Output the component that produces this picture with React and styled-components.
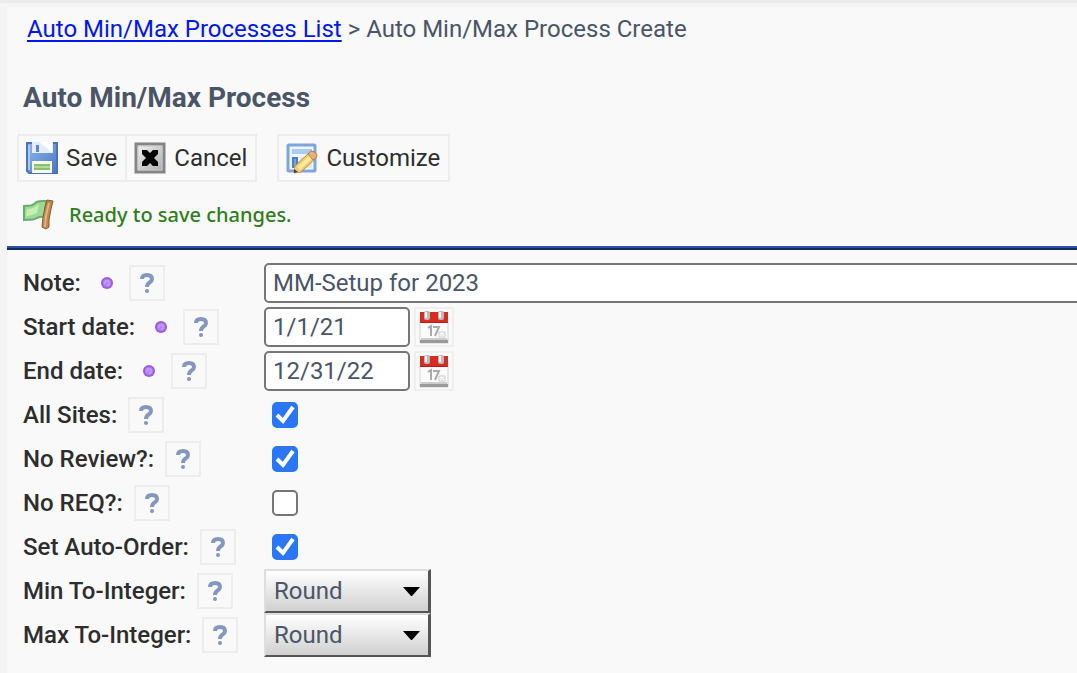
import React from 'react';
import styled, { createGlobalStyle } from 'styled-components';

const GlobalStyle = createGlobalStyle`
  * {
    box-sizing: border-box;
  }
  body {
    margin: 0;
    background: #f4f4f4;
    color: #4a5568;
    font-family: Roboto, 'Liberation Sans', sans-serif;
    font-size: 24px;
    line-height: 28px;
  }
  button,
  input,
  select {
    font: inherit;
    color: inherit;
    margin: 0;
  }
`;

const Frame = styled.div`
  min-height: 100vh;
  padding: 4px 0 0 7px;
  border-top: 3px solid #ebebeb;
  overflow: hidden;
`;

const Page = styled.main`
  min-height: calc(100vh - 7px);
  background: #f9f9f9;
`;

const Breadcrumb = styled.nav`
  padding: 8px 20px 0;

  a {
    color: #0018ee;
    text-decoration-thickness: 2px;
    text-underline-offset: 3px;
  }
`;

const Title = styled.h1`
  margin: 0;
  padding: 39px 16px 20px;
  font-size: 28px;
  line-height: 32px;
  font-weight: 700;
`;

const Toolbar = styled.div`
  display: flex;
  padding-left: 10px;
`;

const ToolButton = styled.button`
  display: flex;
  align-items: center;
  gap: 8px;
  height: 48px;
  padding: 0 8px 0 7px;
  margin-left: ${p => (p.$apart ? '20px' : '0')};
  border: 2px solid #ededed;
  border-left-width: ${p => (p.$joined ? '0' : '2px')};
  background: none;
  color: #2d2d2d;
`;

const Status = styled.p`
  display: flex;
  align-items: center;
  gap: 14px;
  margin: 0;
  padding: 16px 16px 14px;
  color: #2f7d1b;
  font-family: 'Noto Sans', 'Open Sans', sans-serif;
  font-size: 20px;
  font-weight: 500;
  line-height: 34px;
`;

const Rule = styled.hr`
  margin: 0;
  height: 4px;
  border: 0;
  border-top: 2px solid #2d54a4;
  background: #14295c;
`;

const Form = styled.form`
  padding: 11px 0 12px 16px;
`;

const Row = styled.div`
  display: grid;
  grid-template-columns: 241px 1fr;
  align-items: center;
  height: 44px;
`;

const LabelCell = styled.div`
  display: flex;
  align-items: center;
  gap: 11px;

  label {
    color: #2d2d2d;
    font-weight: 500;
    white-space: nowrap;
  }
`;

const Required = styled.svg`
  margin: 0 4px 0 8px;
`;

const HelpButton = styled.button`
  display: grid;
  place-items: center;
  width: 36px;
  height: 36px;
  padding: 0;
  border: 2px solid #ededed;
  background: none;
`;

const Field = styled.div`
  display: flex;
  align-items: center;
  gap: 4px;
`;

const TextInput = styled.input`
  width: ${p => (p.$wide ? 'calc(100% + 12px)' : '146px')};
  flex: none;
  height: 40px;
  padding: 0 7px;
  border: 2px solid #767676;
  border-radius: 5px;
  background: #fff;
`;

const DateButton = styled.button`
  display: grid;
  place-items: center;
  width: 40px;
  height: 40px;
  padding: 0;
  border: 2px solid #efefef;
  background: none;
`;

const Tick = styled.span`
  display: grid;
  margin-left: 8px;

  > * {
    grid-area: 1 / 1;
  }
  svg {
    pointer-events: none;
  }
`;

const CheckBox = styled.input`
  appearance: none;
  width: 26px;
  height: 26px;
  border: 2px solid #767676;
  border-radius: 5px;
  background: #fff;

  &:checked {
    border-color: #2b76f5;
    background: #2b76f5;
  }
  & + svg {
    visibility: hidden;
  }
  &:checked + svg {
    visibility: visible;
  }
`;

const SelectBox = styled.span`
  display: grid;
  align-items: center;
  width: 167px;

  > * {
    grid-area: 1 / 1;
  }
  svg {
    justify-self: end;
    margin-right: 11px;
    pointer-events: none;
  }
`;

const Select = styled.select`
  appearance: none;
  width: 100%;
  height: 44px;
  padding: 0 8px;
  border: 2px solid #dedede;
  border-right: 3px solid #555;
  border-bottom-color: #555;
  border-radius: 0;
  background: linear-gradient(#fff, #d0d0d0);
`;

const SaveIcon = () => (
  <svg width="32" height="32" viewBox="0 0 32 32" aria-hidden="true">
    <defs>
      <linearGradient id="disk" x1="0" y1="0" x2="1" y2="1">
        <stop offset="0" stopColor="#8fb6ea" />
        <stop offset="1" stopColor="#4d77c2" />
      </linearGradient>
    </defs>
    <path d="M1 1h30v30H3l-2-2z" fill="url(#disk)" stroke="#4874bd" strokeWidth="2" />
    <path d="M3 3v25" stroke="#a8c9f0" strokeWidth="2" />
    <path d="M6 0h21v11H6z" fill="#e4ecf6" />
    <path d="M13 0h13v10z" fill="#fff" />
    <path d="M10 3h3v7h-3z" fill="#5788d0" />
    <path d="M6 19h20v12H6z" fill="#f4faed" />
    <path d="M8 22h16v2H8zM8 26h16v2H8z" fill="#8cc06c" />
    <path d="M8 24h16v2H8z" fill="#b4d99c" />
  </svg>
);

const CancelIcon = () => (
  <svg width="32" height="32" viewBox="0 0 32 32" aria-hidden="true">
    <defs>
      <linearGradient id="plate" x1="0" y1="0" x2="1" y2="1">
        <stop offset="0" stopColor="#f4f4f4" />
        <stop offset="1" stopColor="#aaa" />
      </linearGradient>
    </defs>
    <path d="M2 2h28v28H2z" fill="url(#plate)" stroke="#858585" strokeWidth="3" />
    <path d="M4 4h24v24H4z" fill="none" stroke="#c9c9c9" />
    <path
      d="M8 8h5l3 3 3-3h5v4l-4 4 4 4v4h-5l-3-3-3 3H8v-4l4-4-4-4z"
      fill="#050505"
    />
  </svg>
);

const CustomizeIcon = () => (
  <svg width="32" height="32" viewBox="0 0 32 32" aria-hidden="true">
    <rect x="2" y="3" width="27" height="26" rx="1" fill="#eff6fd" stroke="#7fa5dc" strokeWidth="3" />
    <path d="M6 7h20v5H6z" fill="#a9cdf3" />
    <path d="M6 15h6v11H6z" fill="#4f7dc5" />
    <path d="M8 17h2v7H8z" fill="#7fa7df" />
    <path d="M14 15h12v11H14z" fill="#d9e8f8" />
    <path d="M8 31l1-7L24 10l6 6-15 14z" fill="#f1ce62" stroke="#c48a3b" />
    <path d="M11 25L25 12l3 3-14 13z" fill="#fbe99b" />
    <path d="M22 12l3-3 4 1 2 3-1 3-3 2z" fill="#e6b17e" stroke="#b97b45" />
    <path d="M8 31l1-7 6 6z" fill="#ebc698" />
    <path d="M8 31v-4l4 3z" fill="#543821" />
  </svg>
);

const FlagIcon = () => (
  <svg width="32" height="32" viewBox="0 0 32 32" aria-hidden="true">
    <path
      d="M1 7c4-1 6 1 10-2 3-4 8-3 12-3l-1 16c-4-1-6 0-8 1-4 3-8 1-13 2z"
      fill="#9dda93"
      stroke="#6aaa75"
      strokeWidth="2"
    />
    <path d="M4 10c5 0 8-2 12-5l-2 9c-4 1-6 3-11 3z" fill="#c4f0b4" />
    <path d="M24 1l6 1-2 8-2 11v7l-3 2-4-2 1-10 2-10z" fill="#bd8850" stroke="#8b5a2c" />
    <path d="M26 4l-3 13-1 11" fill="none" stroke="#dfb57c" strokeWidth="2" />
  </svg>
);

const CalendarIcon = () => (
  <svg width="32" height="34" viewBox="0 0 32 34" aria-hidden="true">
    <path d="M2 8h28v25H2z" fill="#fafafa" stroke="#d4d4d4" />
    <path d="M2 30h28v3H2z" fill="#999" />
    <path d="M3 28h26v2H3z" fill="#ccc" />
    <path d="M2 2h28v11H2z" fill="#d82c20" />
    <path d="M2 12h28v1H2z" fill="#b91e18" />
    <rect x="6" y="1" width="6" height="9" rx="2" fill="#bbb" />
    <rect x="20" y="1" width="6" height="9" rx="2" fill="#bbb" />
    <path d="M8 2v6M22 2v6" stroke="#f2f2f2" strokeWidth="2" />
    <path d="M10 18l3-2v10M15 17h6l-4 9" fill="none" stroke="#aaa" strokeWidth="2" />
    <path d="M21 22h6v5h-6z" fill="#fff" stroke="#ccc" />
    <path d="M22 24l2 2 3-4" fill="none" stroke="#ddd" />
  </svg>
);

const HelpIcon = () => (
  <svg width="16" height="20" viewBox="0 0 16 20" aria-hidden="true">
    <path
      d="M3 6c0-3 2-4 5-4s5 1 5 4c0 4-5 3-5 8"
      fill="none"
      stroke="#8397bf"
      strokeWidth="4"
    />
    <circle cx="8" cy="18" r="2" fill="#8397bf" />
  </svg>
);

const RequiredIcon = () => (
  <Required width="14" height="14" viewBox="0 0 14 14" role="img" aria-label="Required">
    <circle cx="7" cy="7" r="6" fill="#9a5be2" />
    <circle cx="7" cy="7" r="4" fill="#b382ef" />
    <path d="M5 8V5h4v4H7" fill="none" stroke="#cda9f8" />
  </Required>
);

const FormRow = ({ id, label, required, children }) => (
  <Row>
    <LabelCell>
      <label htmlFor={id}>{label}</label>
      {required && <RequiredIcon />}
      <HelpButton type="button" aria-label={`Help: ${label}`}>
        <HelpIcon />
      </HelpButton>
    </LabelCell>
    <Field>{children}</Field>
  </Row>
);

const dates = [
  { id: 'start', label: 'Start date:', value: '1/1/21' },
  { id: 'end', label: 'End date:', value: '12/31/22' }
];

const flags = [
  { id: 'sites', label: 'All Sites:', checked: true },
  { id: 'review', label: 'No Review?:', checked: true },
  { id: 'req', label: 'No REQ?:', checked: false },
  { id: 'order', label: 'Set Auto-Order:', checked: true }
];

const roundings = [
  { id: 'min', label: 'Min To-Integer:' },
  { id: 'max', label: 'Max To-Integer:' }
];

const App = () => (
  <Frame>
    <GlobalStyle />
    <Page>
      <Breadcrumb>
        <a href="#list">Auto Min/Max Processes List</a> &gt; Auto Min/Max Process Create
      </Breadcrumb>
      <Title>Auto Min/Max Process</Title>
      <Toolbar>
        <ToolButton type="submit" form="process">
          <SaveIcon />
          Save
        </ToolButton>
        <ToolButton type="button" $joined>
          <CancelIcon />
          Cancel
        </ToolButton>
        <ToolButton type="button" $apart>
          <CustomizeIcon />
          Customize
        </ToolButton>
      </Toolbar>
      <Status>
        <FlagIcon />
        Ready to save changes.
      </Status>
      <Rule />
      <Form id="process" onSubmit={e => e.preventDefault()}>
        <FormRow id="note" label="Note:" required>
          <TextInput id="note" type="text" defaultValue="MM-Setup for 2023" $wide />
        </FormRow>
        {dates.map(({ id, label, value }) => (
          <FormRow key={id} id={id} label={label} required>
            <TextInput id={id} type="text" defaultValue={value} />
            <DateButton type="button" aria-label="Pick a date">
              <CalendarIcon />
            </DateButton>
          </FormRow>
        ))}
        {flags.map(({ id, label, checked }) => (
          <FormRow key={id} id={id} label={label}>
            <Tick>
              <CheckBox id={id} type="checkbox" defaultChecked={checked} />
              <svg width="26" height="26" viewBox="0 0 26 26" aria-hidden="true">
                <path d="M5 13l6 6L21 5" fill="none" stroke="#fff" strokeWidth="4" />
              </svg>
            </Tick>
          </FormRow>
        ))}
        {roundings.map(({ id, label }) => (
          <FormRow key={id} id={id} label={label}>
            <SelectBox>
              <Select id={id} defaultValue="round">
                <option value="round">Round</option>
                <option value="up">Up</option>
                <option value="down">Down</option>
              </Select>
              <svg width="17" height="9" viewBox="0 0 17 9" aria-hidden="true">
                <path d="M0 0h17L9 9H8z" fill="#000" />
              </svg>
            </SelectBox>
          </FormRow>
        ))}
      </Form>
    </Page>
  </Frame>
);

export default App;
